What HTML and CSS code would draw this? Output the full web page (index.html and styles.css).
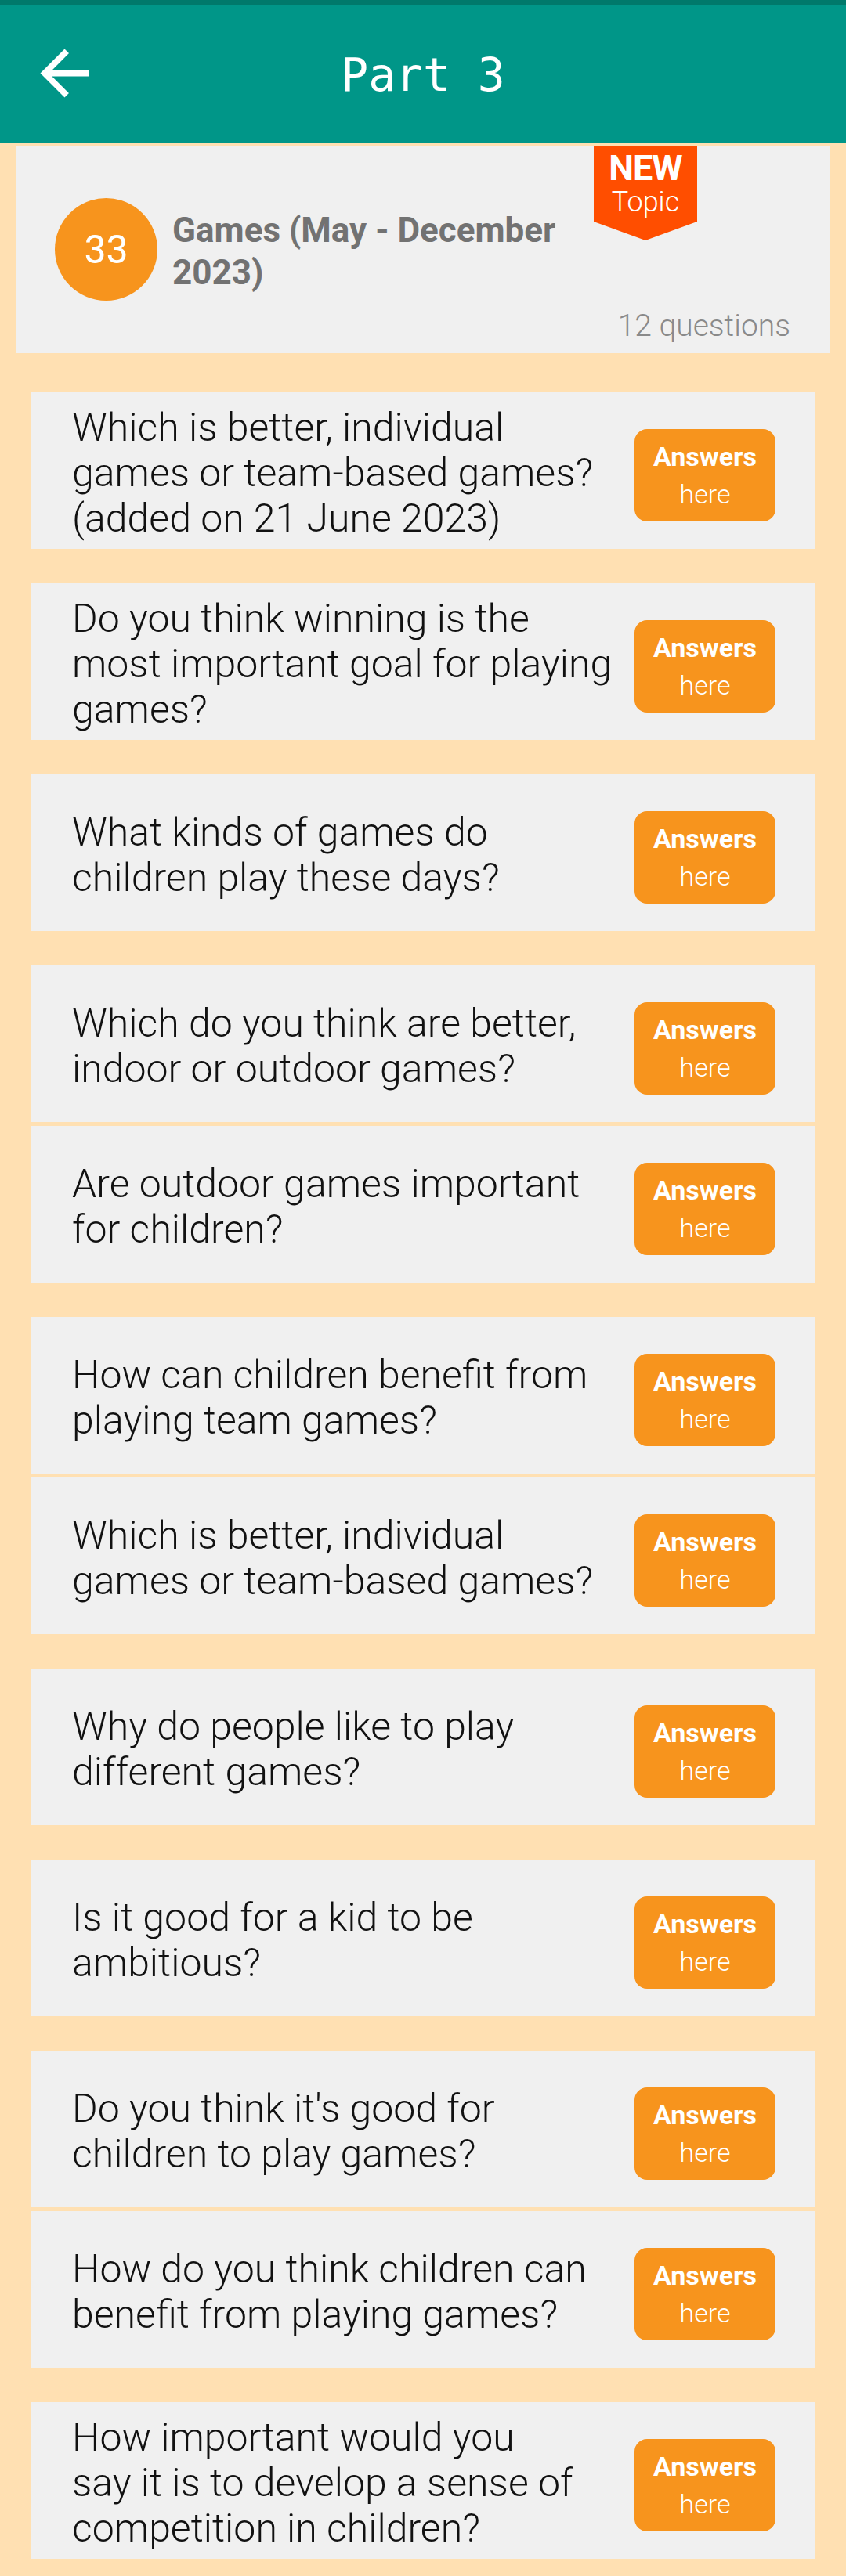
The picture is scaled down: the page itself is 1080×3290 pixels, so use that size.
FILE: index.html
```html
<!DOCTYPE html>
<html lang="en">
<head>
<meta charset="utf-8">
<title>Part 3</title>
<link rel="stylesheet" href="styles.css">
</head>
<body>
<div class="statusbar"></div>
<header class="appbar">
  <svg class="back" viewBox="0 0 24 24" aria-hidden="true"><path d="M20 11H7.83l5.59-5.59L12 4l-8 8 8 8 1.41-1.41L7.83 13H20v-2z"/></svg>
  <h1 class="title">Part 3</h1>
</header>
<main class="page">
  <section class="topic">
    <div class="topic-row">
      <div class="num">33</div>
      <div class="topic-name">Games (May - December<br>2023)</div>
    </div>
    <div class="count">12 questions</div>
    <div class="badge"><span class="badge-new">NEW</span><span class="badge-topic">Topic</span></div>
  </section>

  <div class="list">
    <div class="group">
      <div class="card"><p class="q">Which is better, individual<br>games or team-based games?<br>(added on 21 June 2023)</p><div class="btn"><span class="b1">Answers</span><span class="b2">here</span></div></div>
    </div>
    <div class="group">
      <div class="card"><p class="q">Do you think winning is the<br>most important goal for playing<br>games?</p><div class="btn"><span class="b1">Answers</span><span class="b2">here</span></div></div>
    </div>
    <div class="group">
      <div class="card"><p class="q">What kinds of games do<br>children play these days?</p><div class="btn"><span class="b1">Answers</span><span class="b2">here</span></div></div>
    </div>
    <div class="group">
      <div class="card"><p class="q">Which do you think are better,<br>indoor or outdoor games?</p><div class="btn"><span class="b1">Answers</span><span class="b2">here</span></div></div>
      <div class="card"><p class="q">Are outdoor games important<br>for children?</p><div class="btn"><span class="b1">Answers</span><span class="b2">here</span></div></div>
    </div>
    <div class="group">
      <div class="card"><p class="q">How can children benefit from<br>playing team games?</p><div class="btn"><span class="b1">Answers</span><span class="b2">here</span></div></div>
      <div class="card"><p class="q">Which is better, individual<br>games or team-based games?</p><div class="btn"><span class="b1">Answers</span><span class="b2">here</span></div></div>
    </div>
    <div class="group">
      <div class="card"><p class="q">Why do people like to play<br>different games?</p><div class="btn"><span class="b1">Answers</span><span class="b2">here</span></div></div>
    </div>
    <div class="group">
      <div class="card"><p class="q">Is it good for a kid to be<br>ambitious?</p><div class="btn"><span class="b1">Answers</span><span class="b2">here</span></div></div>
    </div>
    <div class="group">
      <div class="card"><p class="q">Do you think it's good for<br>children to play games?</p><div class="btn"><span class="b1">Answers</span><span class="b2">here</span></div></div>
      <div class="card"><p class="q">How do you think children can<br>benefit from playing games?</p><div class="btn"><span class="b1">Answers</span><span class="b2">here</span></div></div>
    </div>
    <div class="group">
      <div class="card"><p class="q">How important would you<br>say it is to develop a sense of<br>competition in children?</p><div class="btn"><span class="b1">Answers</span><span class="b2">here</span></div></div>
    </div>
  </div>
</main>
</body>
</html>
```

FILE: styles.css
```css
* { box-sizing: border-box; }
html, body {
  margin: 0;
  padding: 0;
  background: #FFE0B2;
  font-family: Roboto, "Noto Sans", sans-serif;
}
.statusbar {
  height: 6px;
  background: #00796B;
}
.appbar {
  position: relative;
  height: 176px;
  background: #009688;
  display: flex;
  align-items: center;
  justify-content: center;
}
.back {
  position: absolute;
  left: 36px;
  top: 41px;
  width: 93px;
  height: 93px;
  fill: #ffffff;
}
.title {
  margin: 0;
  padding-top: 4px;
  font-family: "DejaVu Sans Mono", "Liberation Mono", monospace;
  font-weight: normal;
  font-size: 58px;
  color: #ffffff;
}
.page {
  padding: 5px 0 22px;
}
.topic {
  position: relative;
  margin: 0 21px 0 20px;
  height: 264px;
  background: #F0F0F0;
  padding: 66px 50px 0 50px;
}
.topic-row {
  display: flex;
  align-items: center;
  height: 131px;
}
.num {
  width: 131px;
  height: 131px;
  border-radius: 50%;
  background: #F7941D;
  color: #fff;
  font-size: 50px;
  display: flex;
  align-items: center;
  justify-content: center;
  flex: none;
}
.topic-name {
  margin-left: 19px;
  font-size: 44px;
  font-weight: bold;
  line-height: 54px;
  color: #727272;
  padding-top: 4px;
}
.count {
  margin-top: 10px;
  text-align: right;
  font-family: "Roboto Light", Roboto, sans-serif;
  font-size: 39px;
  font-weight: 300;
  color: #8a8a8a;
  line-height: 45px;
}
.badge {
  position: absolute;
  top: 0;
  left: 738px;
  width: 132px;
  height: 120px;
  background: #FF4E00;
  clip-path: polygon(0 0, 100% 0, 100% 96px, 50% 120px, 0 96px);
  color: #fff;
  display: flex;
  flex-direction: column;
  align-items: center;
  padding-top: 4px;
}
.badge-new {
  font-size: 45px;
  font-weight: bold;
  line-height: 48px;
  letter-spacing: -1px;
}
.badge-topic {
  font-family: "Roboto Light", Roboto, sans-serif;
  font-size: 36px;
  font-weight: 300;
  line-height: 38px;
}
.list {
  margin: 50px 40px 0 40px;
  display: flex;
  flex-direction: column;
  gap: 44px;
}
.group {
  display: flex;
  flex-direction: column;
  gap: 5px;
}
.card {
  height: 200px;
  background: #F0F0F0;
  display: flex;
  align-items: center;
  padding: 6px 50px 0 52px;
}
.q {
  flex: 1;
  margin: 0;
  font-family: "Roboto Light", Roboto, sans-serif;
  font-size: 50px;
  font-weight: 300;
  line-height: 58px;
  color: #111;
  white-space: nowrap;
}
.btn {
  flex: none;
  width: 180px;
  height: 118px;
  margin-top: 6px;
  border-radius: 16px;
  background: #F7941D;
  color: #fff;
  display: flex;
  flex-direction: column;
  align-items: center;
  justify-content: center;
  font-size: 34px;
  line-height: 48px;
}
.b1 { font-weight: bold; }
.b2 { font-family: "Roboto Light", Roboto, sans-serif; font-weight: 300; }
```
